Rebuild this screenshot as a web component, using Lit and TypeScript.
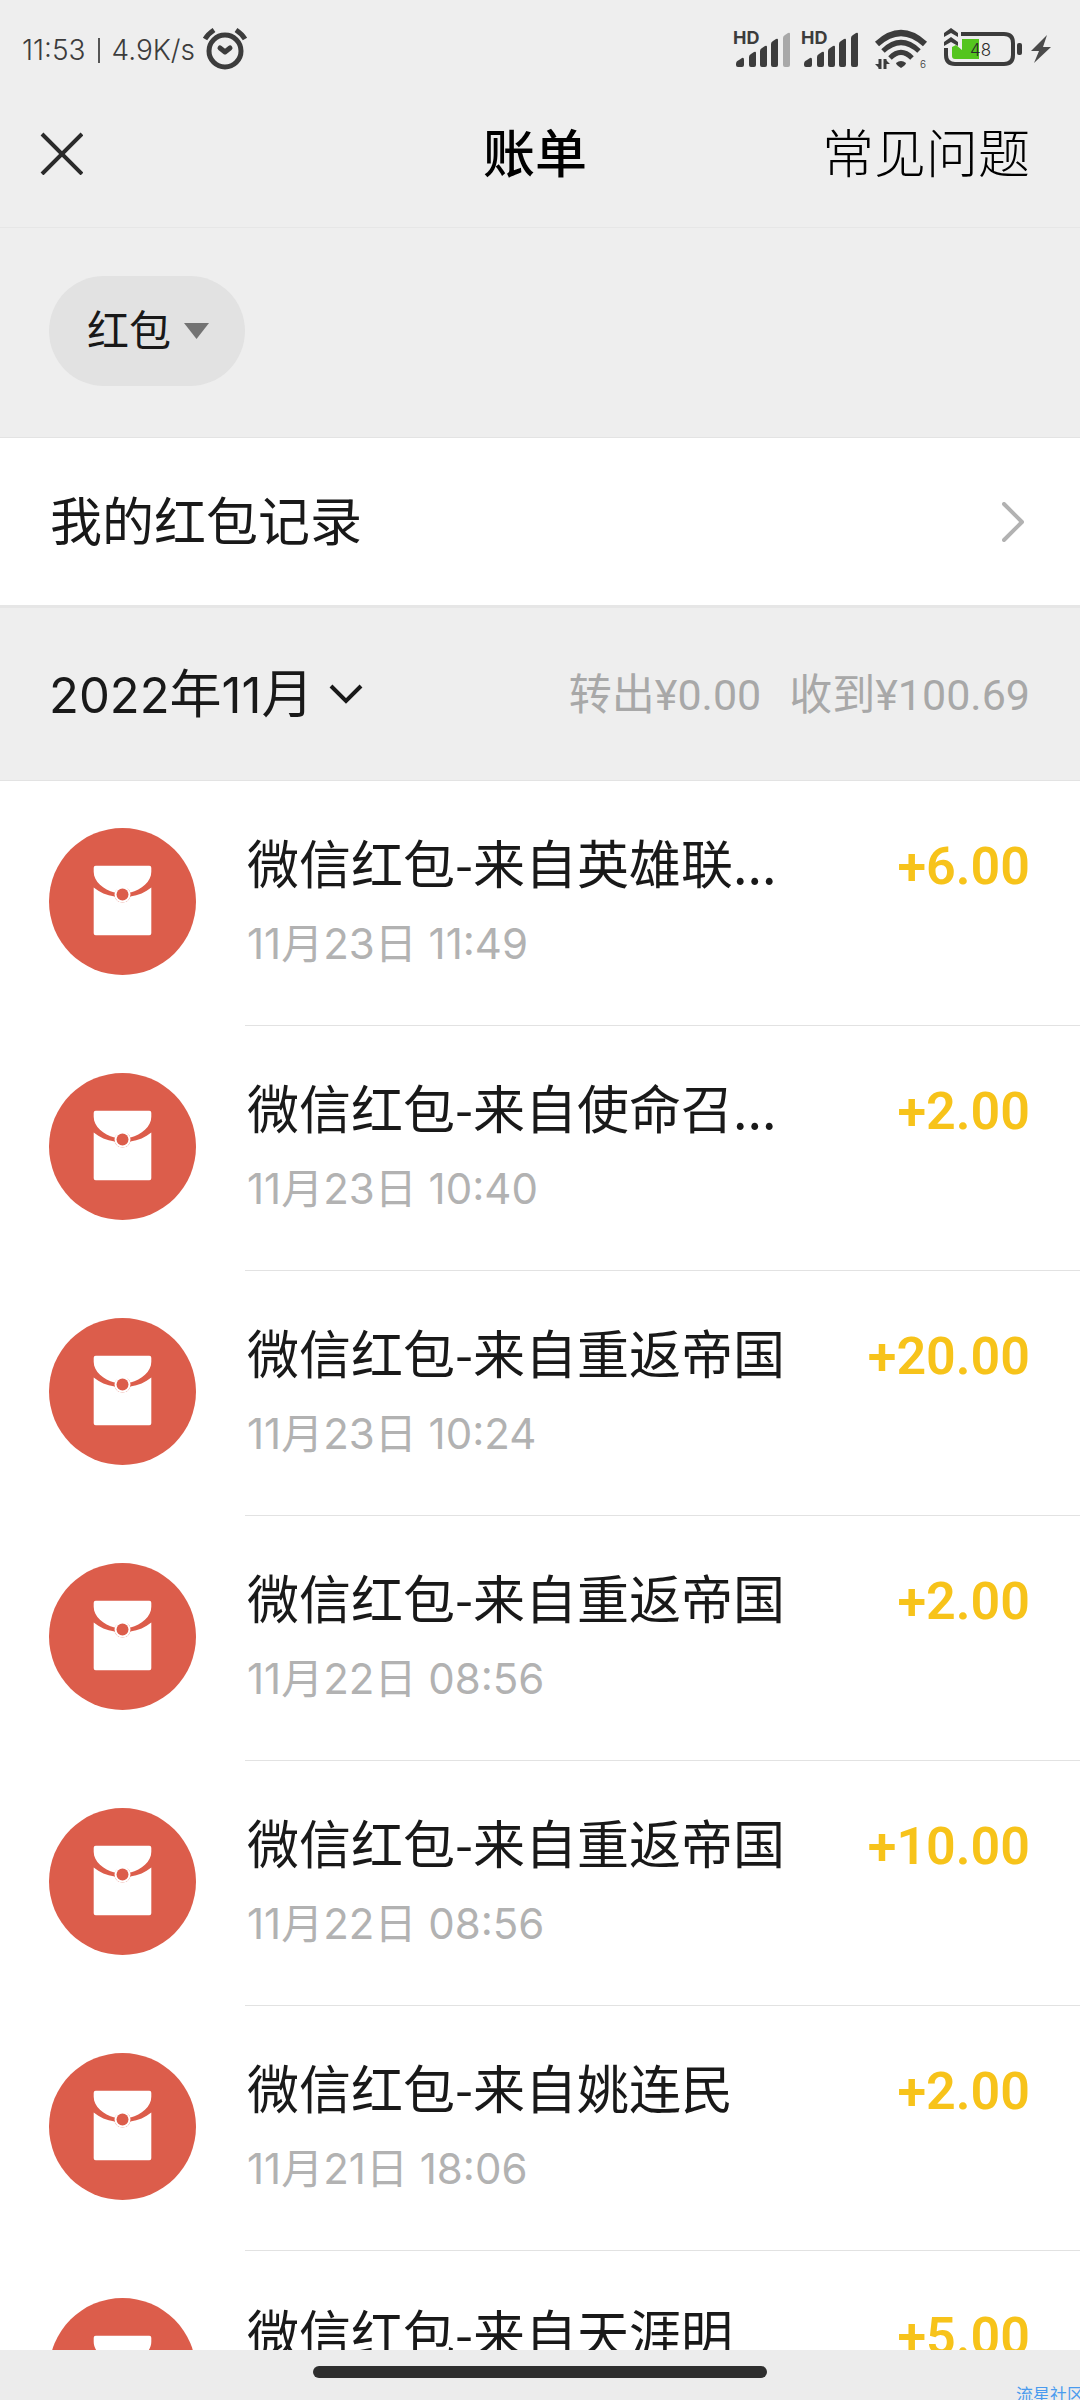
import { LitElement, html, css, svg } from "lit";
import { customElement, property } from "lit/decorators.js";

interface Bill {
  title: string;
  date?: [string, string, string];
  amount: string;
}

const BILLS: Bill[] = [
  { title: "微信红包-来自英雄联...", date: ["11", "23", "11:49"], amount: "+6.00" },
  { title: "微信红包-来自使命召...", date: ["11", "23", "10:40"], amount: "+2.00" },
  { title: "微信红包-来自重返帝国", date: ["11", "23", "10:24"], amount: "+20.00" },
  { title: "微信红包-来自重返帝国", date: ["11", "22", "08:56"], amount: "+2.00" },
  { title: "微信红包-来自重返帝国", date: ["11", "22", "08:56"], amount: "+10.00" },
  { title: "微信红包-来自姚连民", date: ["11", "21", "18:06"], amount: "+2.00" },
  { title: "微信红包-来自天涯明", amount: "+5.00" },
];

@customElement("status-bar")
export class StatusBar extends LitElement {
  static styles = css`
    :host {
      display: flex;
      align-items: center;
      justify-content: space-between;
      height: 80px;
      padding: 20px 28px 0 22px;
      box-sizing: border-box;
      color: #3c3c3c;
      font-family: Inter, "Liberation Sans", sans-serif;
    }
    .left,
    .right {
      display: flex;
      align-items: center;
    }
    .left {
      font-size: 28px;
      font-weight: 300;
      line-height: 40px;
      gap: 12px;
    }
    .rule {
      width: 2px;
      height: 25px;
      background: #555;
    }
    .speed {
      display: flex;
      align-items: center;
      gap: 8px;
    }
    .right {
      gap: 16px;
    }
    .signals {
      display: flex;
      gap: 11px;
    }
    svg {
      display: block;
      overflow: visible;
    }
    .small {
      font-size: 10px;
      font-weight: 300;
    }
    .hd {
      font-size: 18px;
      font-weight: 700;
    }
    .level {
      font-size: 17px;
      font-weight: 300;
    }
  `;

  private signal(last: string) {
    return html`<svg width="57" height="40" viewBox="0 0 57 40" fill="#3c3c3c" aria-hidden="true">
      <text class="hd" x="-1" y="14">HD</text>
      <path d="M2 34Q2 31 5 30L8 28Q10 27 10 30V35Q10 37 8 37H4Q2 37 2 35Z" />
      <path d="M15 27Q15 25 17 24L20 22Q22 21 22 23V35Q22 37 20 37H17Q15 37 15 35Z" />
      <path d="M26 21Q26 19 28 18L31 16Q33 15 33 17V35Q33 37 31 37H28Q26 37 26 35Z" />
      <path d="M37 14Q37 12 39 11L42 9Q44 8 44 10V35Q44 37 42 37H39Q37 37 37 35Z" />
      <path fill=${last} d="M49 8Q49 6 51 5L54 3Q56 2 56 4V35Q56 37 54 37H51Q49 37 49 35Z" />
    </svg>`;
  }

  render() {
    return html`
      <div class="left">
        <span>11:53</span>
        <span class="rule"></span>
        <span class="speed">
          <span>4.9K/s</span>
          <svg width="44" height="42" viewBox="0 0 44 42" fill="none" stroke="#3c3c3c" aria-hidden="true">
            <circle cx="22" cy="22" r="16" stroke-width="5" />
            <path d="M2 10Q5 5 11 1M42 10Q39 5 33 1" stroke-width="5" />
            <path d="M17 19L22 23L27 19" stroke-width="5" stroke-linecap="round" stroke-linejoin="round" />
          </svg>
        </span>
      </div>
      <div class="right">
        <div class="signals">${this.signal("#a8a8a8")}${this.signal("#3c3c3c")}</div>
        <svg width="53" height="40" viewBox="0 0 53 40" fill="none" stroke="#3c3c3c" stroke-width="6" aria-hidden="true">
          <path d="M2 14Q26 -8 50 14" />
          <path d="M8 21Q26 4 44 21" stroke-width="5" />
          <path d="M15 28Q26 17 37 28" stroke-width="5" />
          <path d="M21 33Q26 29 31 33Q31 35 26 38Q21 35 21 33Z" fill="#3c3c3c" stroke="none" />
          <path d="M5 29V39M10 39V29" stroke-width="3" />
          <path d="M0 34L5 39H6V34ZM15 34L10 29H9V34Z" fill="#3c3c3c" stroke="none" />
          <text class="small" x="45" y="38" fill="#3c3c3c" stroke="none">6</text>
        </svg>
        <svg width="108" height="40" viewBox="0 0 108 40" aria-hidden="true">
          <path d="M17 4H60Q69 4 69 13V25Q69 34 60 34H11Q2 34 2 25V18" fill="none" stroke="#3c3c3c" stroke-width="4" />
          <path d="M8 17L12 15L18 20V9H35V29H11Q8 29 8 26Z" fill="#54c51e" />
          <path d="M0 3L7 -2L14 3V7L7 3L0 7ZM0 12L7 7L14 12V16L7 12L0 16Z" fill="#3c3c3c" />
          <rect x="73" y="13" width="5" height="12" rx="2" fill="#3c3c3c" />
          <text class="level" x="26" y="26" fill="#2b2b2b">48</text>
          <path d="M103 5L87 21H95L90 33L107 17H99Z" fill="#4a4a4a" />
        </svg>
      </div>
    `;
  }
}

const envelope = svg`
  <ellipse cx="74" cy="74" rx="74" ry="74" fill="#dc5d4b" />
  <path d="M45 40Q45 38 47 38H101Q103 38 103 40V44C103 54 93 62 82 65Q80 60 74 60Q69 60 66 65C55 62 45 54 45 44Z" fill="#fff" />
  <path d="M45 60C51 65 58 68 66 69Q68 75 74 75Q80 75 82 69C90 68 97 65 103 60V106Q103 108 101 108H47Q45 108 45 106Z" fill="#fff" />
  <circle cx="74" cy="67" r="8" fill="#fff" />
  <circle cx="74" cy="67" r="6" fill="#dc5d4b" />
`;

@customElement("bill-row")
export class BillRow extends LitElement {
  @property({ attribute: false }) bill!: Bill;

  static styles = css`
    :host {
      display: flex;
      gap: 49px;
      padding-left: 49px;
      height: 245px;
      box-sizing: border-box;
    }
    .icon {
      flex: none;
      width: 147px;
      height: 147px;
      margin-top: 47px;
    }
    .body {
      flex: 1;
      min-width: 0;
      display: flex;
      justify-content: space-between;
      gap: 24px;
      padding: 50px 50px 0 2px;
      border-bottom: 1px solid #e2e2e2;
    }
    .title {
      margin: 0;
      font-size: 52px;
      font-weight: 400;
      line-height: 62px;
      color: #191919;
      white-space: nowrap;
    }
    .date {
      display: block;
      margin-top: 25px;
      font-size: 42px;
      font-weight: 400;
      line-height: 52px;
      color: #b2b2b2;
      font-family: Inter, "Noto Sans CJK SC", sans-serif;
    }
    .amount {
      font-family: Roboto, "Liberation Sans", sans-serif;
      font-size: 52px;
      font-weight: 600;
      line-height: 72px;
      color: #f7c31a;
    }
  `;

  render() {
    const { title, date, amount } = this.bill;
    return html`
      <svg class="icon" viewBox="0 0 148 148" aria-hidden="true">${envelope}</svg>
      <div class="body">
        <div>
          <h2 class="title">${title}</h2>
          ${date ? html`<time class="date">${date[0]}月${date[1]}日 ${date[2]}</time>` : null}
        </div>
        <span class="amount">${amount}</span>
      </div>
    `;
  }
}

@customElement("app-root")
export class AppRoot extends LitElement {
  static styles = css`
    :host {
      display: flex;
      flex-direction: column;
      position: relative;
      height: 100vh;
      overflow: hidden;
      background: #eee;
      color: #191919;
      font-family: "Noto Sans CJK SC", sans-serif;
    }
    button,
    select {
      margin: 0;
      padding: 0;
      border: 0;
      background: none;
      color: inherit;
      font: inherit;
      appearance: none;
    }
    a {
      color: inherit;
      text-decoration: none;
    }
    svg {
      display: block;
      flex: none;
    }
    .text {
      padding-bottom: 7px;
    }
    .nav {
      display: grid;
      grid-template-columns: 1fr auto 1fr;
      align-items: center;
      height: 148px;
      padding: 0 50px 0 40px;
      box-sizing: border-box;
      border-bottom: 1px solid #e6e6e6;
      color: #000;
      font-family: KaiTi, STKaiti, "Noto Sans CJK SC", serif;
      font-size: 52px;
    }
    .nav h1 {
      margin: 0;
      font-size: 52px;
      font-weight: 500;
    }
    .help {
      justify-self: end;
      font-weight: 300;
    }
    .close {
      justify-self: start;
    }
    .filter {
      padding: 48px 49px 51px;
      border-bottom: 1px solid #e3e3e3;
    }
    .pill {
      display: inline-flex;
      align-items: center;
      gap: 12px;
      height: 110px;
      padding: 0 36px 0 38px;
      box-sizing: border-box;
      border-radius: 55px;
      background: #e2e2e2;
      vertical-align: top;
      font-size: 42px;
    }
    .records {
      display: flex;
      align-items: center;
      justify-content: space-between;
      height: 167px;
      padding: 0 56px 0 50px;
      background: #fff;
      border-bottom: 3px solid #e6e6e6;
      font-size: 52px;
    }
    .month-bar {
      display: flex;
      align-items: center;
      justify-content: space-between;
      height: 172px;
      padding: 0 50px 0 49px;
      border-bottom: 1px solid #e3e3e3;
    }
    .month {
      display: flex;
      align-items: center;
      gap: 16px;
      font-size: 52px;
    }
    .num {
      font-family: Inter, sans-serif;
      font-size: 49px;
    }
    .totals {
      display: flex;
      gap: 28px;
      color: #a8a8a8;
      font-family: Roboto, "Noto Sans CJK SC", sans-serif;
      font-size: 43px;
    }
    .list {
      flex: 1;
      min-height: 0;
      overflow: hidden;
      background: #fff;
    }
    .home {
      flex: none;
      display: flex;
      justify-content: center;
      height: 50px;
      padding-top: 16px;
      box-sizing: border-box;
      background: #ececec;
    }
    .home-bar {
      width: 42%;
      height: 12px;
      border-radius: 6px;
      background: #2e2e2e;
    }
    .mark {
      position: absolute;
      right: -4px;
      bottom: -4px;
      font-size: 17px;
      line-height: 20px;
      color: #4a9bee;
    }
  `;

  render() {
    return html`
      <status-bar></status-bar>
      <header class="nav">
        <button class="close" aria-label="关闭">
          <svg width="43" height="43" viewBox="0 0 43 43" fill="none" stroke="#2a2a2a" stroke-width="4">
            <path d="M2 2L42 42M42 2L2 42" />
          </svg>
        </button>
        <h1 class="text">账单</h1>
        <a class="help text" href="#help">常见问题</a>
      </header>
      <div class="filter">
        <label class="pill">
          <select class="text" aria-label="红包">
            <option>红包</option>
          </select>
          <svg width="25" height="16" viewBox="0 0 25 16"><path d="M0 0H25L12.500 16Z" fill="#737373" /></svg>
        </label>
      </div>
      <a class="records" href="#records">
        <span class="text">我的红包记录</span>
        <svg width="22" height="40" viewBox="0 0 22 40" fill="none" stroke="#b2b2b2" stroke-width="4">
          <path d="M2 2L20 20L2 38" stroke-linecap="round" stroke-linejoin="round" />
        </svg>
      </a>
      <div class="month-bar">
        <button class="month">
          <span class="text"><span class="num">2022</span>年<span class="num">11</span>月</span>
          <svg width="34" height="20" viewBox="0 0 34 20" fill="none" stroke="#191919" stroke-width="4">
            <path d="M2 2L17 17L32 2" />
          </svg>
        </button>
        <div class="totals text"><span>转出¥0.00</span><span>收到¥100.69</span></div>
      </div>
      <main class="list">${BILLS.map((bill) => html`<bill-row .bill=${bill}></bill-row>`)}</main>
      <footer class="home"><div class="home-bar"></div></footer>
      <span class="mark">流星社区</span>
    `;
  }
}
